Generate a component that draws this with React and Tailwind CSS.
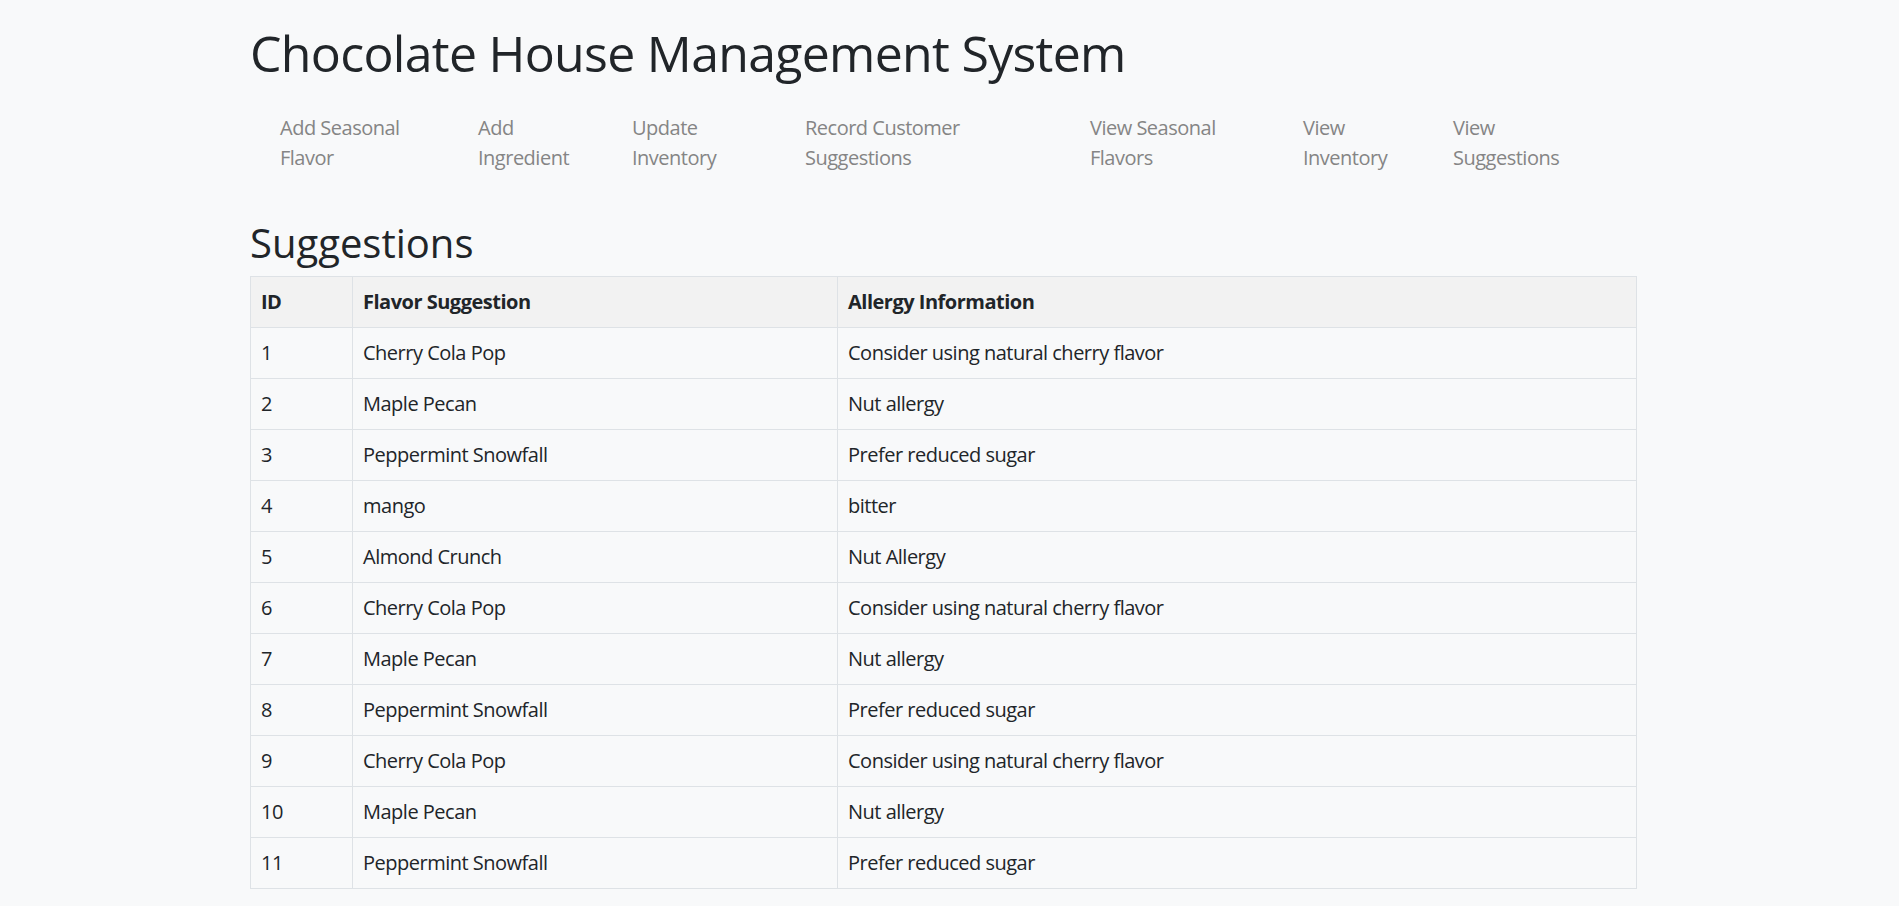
const navItems = [
  { lines: ['Add Seasonal', 'Flavor'], w: 'w-[198px]' },
  { lines: ['Add', 'Ingredient'], w: 'w-[154px]' },
  { lines: ['Update', 'Inventory'], w: 'w-[173px]' },
  { lines: ['Record Customer', 'Suggestions'], w: 'w-[285px]' },
  { lines: ['View Seasonal', 'Flavors'], w: 'w-[213px]' },
  { lines: ['View', 'Inventory'], w: 'w-[150px]' },
  { lines: ['View', 'Suggestions'], w: 'w-[170px]' },
]

const suggestions = [
  { id: 1, flavor: 'Cherry Cola Pop', allergy: 'Consider using natural cherry flavor' },
  { id: 2, flavor: 'Maple Pecan', allergy: 'Nut allergy' },
  { id: 3, flavor: 'Peppermint Snowfall', allergy: 'Prefer reduced sugar' },
  { id: 4, flavor: 'mango', allergy: 'bitter' },
  { id: 5, flavor: 'Almond Crunch', allergy: 'Nut Allergy' },
  { id: 6, flavor: 'Cherry Cola Pop', allergy: 'Consider using natural cherry flavor' },
  { id: 7, flavor: 'Maple Pecan', allergy: 'Nut allergy' },
  { id: 8, flavor: 'Peppermint Snowfall', allergy: 'Prefer reduced sugar' },
  { id: 9, flavor: 'Cherry Cola Pop', allergy: 'Consider using natural cherry flavor' },
  { id: 10, flavor: 'Maple Pecan', allergy: 'Nut allergy' },
  { id: 11, flavor: 'Peppermint Snowfall', allergy: 'Prefer reduced sugar' },
]

const App = () => {
  return (
    <div className="min-h-screen bg-[#f8f9fa] text-[#212529] font-['Open_Sans',sans-serif]">
      <div className="ml-[250px] w-[1387px] pt-[23px]">
        <h1 className="text-[50px] leading-[60px] font-medium tracking-[-0.7px] mb-[10px]">Chocolate House Management System</h1>

        <nav className="flex pl-[30px] py-[20px]">
          {navItems.map((item, i) => (
            <a key={i} href="#" className={`${item.w} shrink-0 text-[20px] leading-[30px] tracking-[-0.5px] text-[#858585]`}>
              {item.lines[0]}
              <br />
              {item.lines[1]}
            </a>
          ))}
        </nav>

        <h2 className="mt-[26px] text-[40px] leading-[48px] font-medium mb-[9px]">Suggestions</h2>

        <table className="w-full border-collapse text-[20px] leading-[30px] tracking-[-0.5px]">
          <thead>
            <tr className="bg-[#f2f2f2]">
              <th className="w-[102px] border border-[#dee2e6] px-[10px] py-[10px] text-left font-bold">ID</th>
              <th className="w-[485px] border border-[#dee2e6] px-[10px] py-[10px] text-left font-bold">Flavor Suggestion</th>
              <th className="border border-[#dee2e6] px-[10px] py-[10px] text-left font-bold">Allergy Information</th>
            </tr>
          </thead>
          <tbody>
            {suggestions.map((s) => (
              <tr key={s.id}>
                <td className="border border-[#dee2e6] px-[10px] py-[10px]">{s.id}</td>
                <td className="border border-[#dee2e6] px-[10px] py-[10px]">{s.flavor}</td>
                <td className="border border-[#dee2e6] px-[10px] py-[10px]">{s.allergy}</td>
              </tr>
            ))}
          </tbody>
        </table>
      </div>
    </div>
  )
}

export default App
